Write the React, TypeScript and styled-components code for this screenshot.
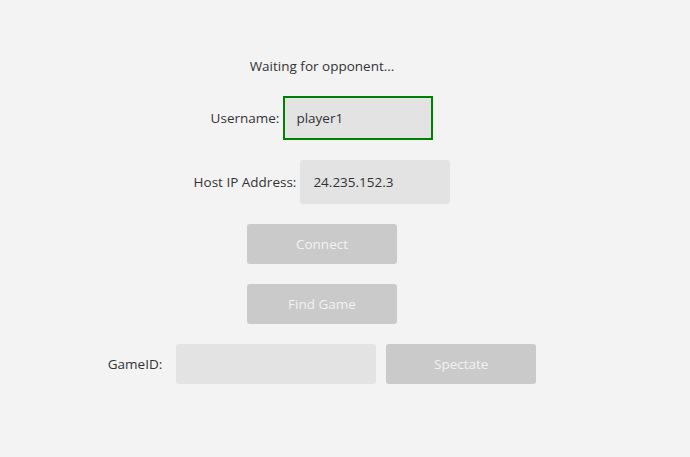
import React from "react";
import styled, { createGlobalStyle } from "styled-components";

const Global = createGlobalStyle`
  html, body { margin: 0; padding: 0; background: #f3f3f3; }
  body { font-family: "Open Sans", "Noto Sans", sans-serif; color: #333333; }
`;

const Page = styled.div`
  width: 644px;
  padding-top: 56px;
  display: flex;
  flex-direction: column;
  align-items: center;
  gap: 20px;
`;

const Status = styled.div`
  font-size: 13.5px;
  line-height: 20px;
  height: 20px;
`;

const Row = styled.div<{ $gap: number }>`
  display: flex;
  align-items: center;
  gap: ${(p) => p.$gap}px;
`;

const Label = styled.span`
  font-size: 13.5px;
`;

const Field = styled.div<{ $w: number; $h: number; $focused?: boolean }>`
  box-sizing: border-box;
  width: ${(p) => p.$w}px;
  height: ${(p) => p.$h}px;
  background: #e3e3e3;
  border: ${(p) => (p.$focused ? "2px solid #008000" : "none")};
  border-radius: ${(p) => (p.$focused ? "0" : "3px")};
  padding-left: ${(p) => (p.$focused ? "11px" : "13px")};
  display: flex;
  align-items: center;
  font-size: 13.5px;
  color: #333333;
`;

const Button = styled.div<{ $h: number }>`
  box-sizing: border-box;
  width: 150px;
  height: ${(p) => p.$h}px;
  background: #cacaca;
  border-radius: 3px;
  display: flex;
  align-items: center;
  justify-content: center;
  font-size: 13.5px;
  color: #f2f2f2;
`;

export default function App() {
  return (
    <>
      <Global />
      <Page>
        <Status>Waiting for opponent...</Status>
        <Row $gap={4}>
          <Label>Username:</Label>
          <Field $w={150} $h={44} $focused>player1</Field>
        </Row>
        <Row $gap={4}>
          <Label>Host IP Address:</Label>
          <Field $w={150} $h={44}>24.235.152.3</Field>
        </Row>
        <Button $h={40}>Connect</Button>
        <Button $h={40}>Find Game</Button>
        <Row $gap={10}>
          <Row $gap={14}>
            <Label>GameID:</Label>
            <Field $w={200} $h={40} />
          </Row>
          <Button $h={40}>Spectate</Button>
        </Row>
      </Page>
    </>
  );
}
